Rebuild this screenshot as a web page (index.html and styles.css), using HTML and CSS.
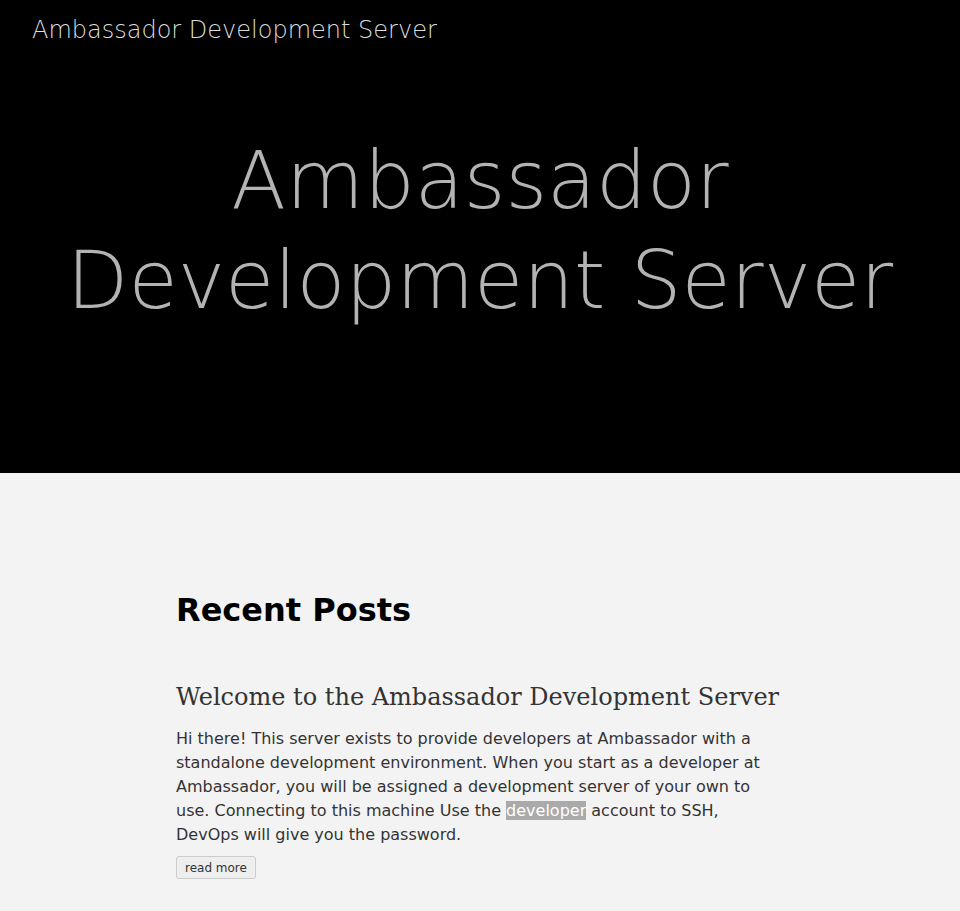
FILE: index.html
```html
<!DOCTYPE html>
<html>
<head>
<meta charset="utf-8">
<link rel="stylesheet" href="styles.css">
</head>
<body>
<header class="hero">
  <nav class="topbar"><a class="brand" href="#">Ambassador Development Server</a></nav>
  <h1 class="hero-title">Ambassador Development Server</h1>
</header>
<main class="content">
  <h2 class="section-title">Recent Posts</h2>
  <article class="post">
    <h3 class="post-title">Welcome to the Ambassador Development Server</h3>
    <p class="post-body">Hi there! This server exists to provide developers at Ambassador with a standalone development environment. When you start as a developer at Ambassador, you will be assigned a development server of your own to use. Connecting to this machine Use the <span class="hl">developer</span> account to SSH, DevOps will give you the password.</p>
    <button class="more">read more</button>
  </article>
</main>
</body>
</html>
```
FILE: styles.css
```css
html, body { margin: 0; padding: 0; }
body { background: #f3f3f3; font-family: "DejaVu Sans", sans-serif; }
.hero { background: #000; height: 473px; box-sizing: border-box; padding: 13px 32px 0; }
.topbar { height: 40px; }
.brand { color: #ddd; text-decoration: none; font-family: "DejaVu Sans", sans-serif; font-weight: 200; font-size: 24px; line-height: 34px; }
.hero-title { margin: 78px 0 0; text-align: center; color: #b3b3b3; font-weight: 200; font-size: 80px; line-height: 100px; }
.content { width: 608px; margin: 0 auto; padding: 117px 0 40px; }
.section-title { margin: 0; font-size: 32px; line-height: 40px; font-weight: bold; color: #000; }
.post { margin-top: 51px; }
.post-title { margin: 0; font-family: "DejaVu Serif", serif; font-weight: normal; font-size: 24px; line-height: 32px; color: #333; }
.post-body { margin: 14px 0 9px; font-family: "DejaVu Sans", sans-serif; font-size: 16px; line-height: 24px; color: #333; }
.hl { background: #aaa; color: #fff; }
.more { font-family: "DejaVu Sans", sans-serif; font-size: 12px; color: #333; background: #eee; border: 1px solid #ccc; border-radius: 3px; padding: 3px 8px; height: 23px; }
```
